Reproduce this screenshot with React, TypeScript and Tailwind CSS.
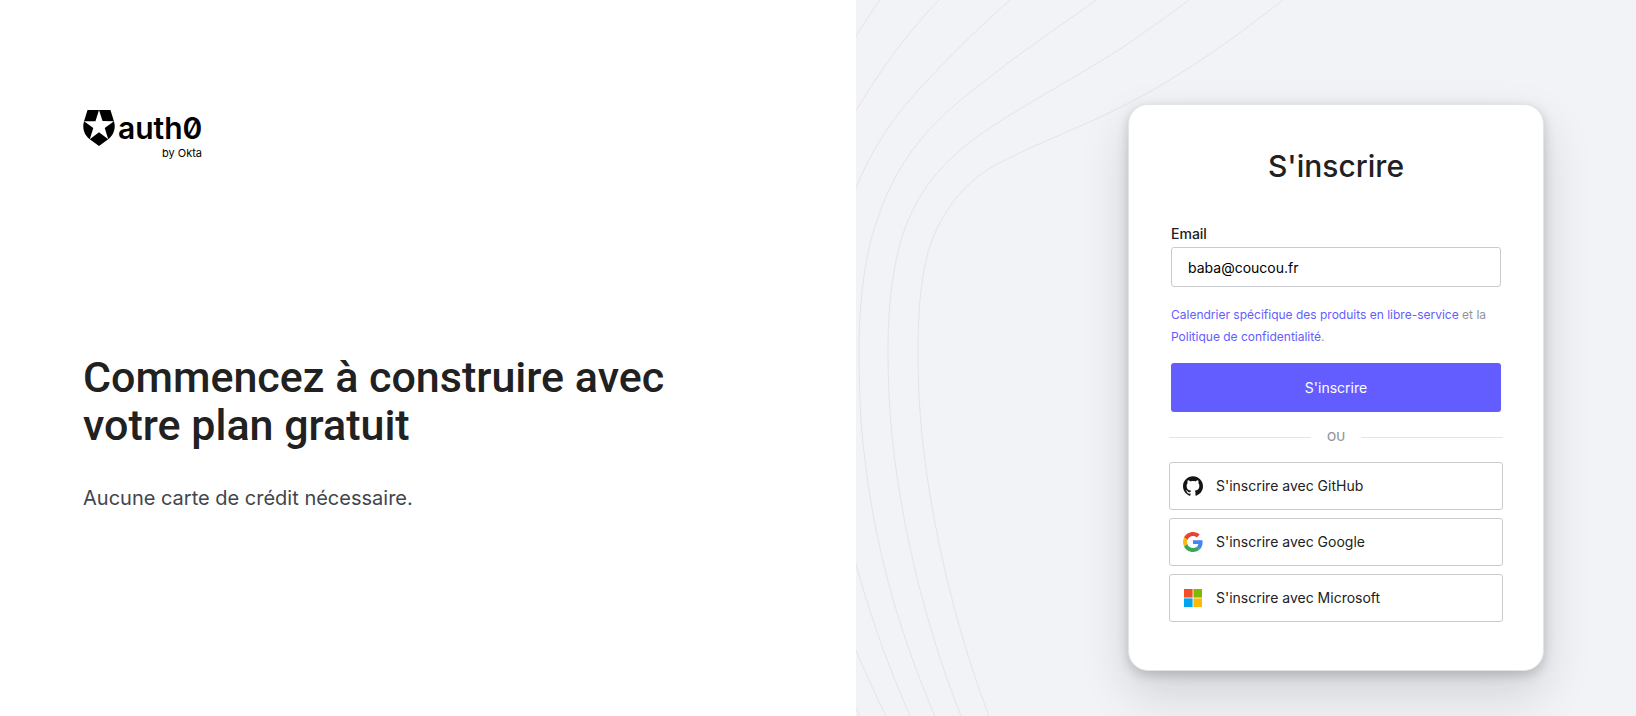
import React from "react";
import { SiAuth0, SiGithub } from "react-icons/si";

function GoogleIcon() {
  return (
    <svg viewBox="0 0 48 48" className="size-5" aria-hidden="true">
      <path
        fill="#EA4335"
        d="M24 9.5c3.54 0 6.71 1.22 9.21 3.6l6.85-6.85C35.9 2.38 30.47 0 24 0 14.62 0 6.51 5.38 2.56 13.22l7.98 6.19C12.43 13.72 17.74 9.5 24 9.5z"
      />
      <path
        fill="#4285F4"
        d="M46.98 24.55c0-1.57-.15-3.09-.38-4.55H24v9.02h12.94c-.58 2.96-2.26 5.48-4.78 7.18l7.73 6c4.51-4.18 7.09-10.36 7.09-17.65z"
      />
      <path
        fill="#FBBC05"
        d="M10.53 28.59c-.48-1.45-.76-2.99-.76-4.59s.27-3.14.76-4.59l-7.98-6.19C.92 16.46 0 20.12 0 24c0 3.88.92 7.54 2.56 10.78l7.97-6.19z"
      />
      <path
        fill="#34A853"
        d="M24 48c6.48 0 11.93-2.13 15.89-5.81l-7.73-6c-2.15 1.45-4.92 2.3-8.16 2.3-6.26 0-11.57-4.22-13.47-9.91l-7.98 6.19C6.51 42.62 14.62 48 24 48z"
      />
    </svg>
  );
}

function MicrosoftIcon() {
  return (
    <svg viewBox="0 0 20 20" className="size-5" aria-hidden="true">
      <path fill="#f25022" d="M1 1h8.6v8.6H1z" />
      <path fill="#7fba00" d="M10.4 1H19v8.6h-8.6z" />
      <path fill="#00a4ef" d="M1 10.4h8.6V19H1z" />
      <path fill="#ffb900" d="M10.4 10.4H19V19h-8.6z" />
    </svg>
  );
}

function Contours() {
  return (
    <svg
      className="pointer-events-none absolute top-0 left-0 h-[716px] w-[780px]"
      viewBox="0 0 780 716"
      fill="none"
      stroke="#e3e4e7"
      aria-hidden="true"
    >
      <path d="M0 36C8 23 16 11 24 0" />
      <path d="M0 111C24 70 52 32 83 0" />
      <path d="M0 188C16 148 38 116 67 85C93 57 123 27 154 0" />
      <path d="M240 0C200 29 165 52 130 80C80 118 38 155 15 240C6 275 3 315 3 350C3 395 5 435 11 476C22 558 46 640 79 716" />
      <path d="M333 0C303 22 272 45 240 64C210 82 176 101 143 122C95 152 62 185 45 240C35 275 32 315 32 350C32 395 35 435 41 476C53 558 75 640 105 716" />
      <path d="M427 0C366 48 305 90 240 119C200 137 172 148 143 163C113 179 91 203 76 240C65 270 62 310 62 350C62 395 65 435 71 476C83 556 104 640 133 716" />
      <path d="M0 564C14 615 32 666 54 716" />
      <path d="M0 650C9 672 19 694 30 716" />
      <path d="M0 708L4 716" />
    </svg>
  );
}

const providers = [
  { name: "GitHub", icon: <SiGithub className="size-5 text-[#161514]" /> },
  { name: "Google", icon: <GoogleIcon /> },
  { name: "Microsoft", icon: <MicrosoftIcon /> },
];

export default function App() {
  return (
    <div className="flex min-h-screen bg-white font-['Inter',sans-serif] text-[#212121]">
      <main className="min-w-0 flex-1 px-[83px] pt-[110px]">
        <div className="w-[119px] text-black">
          <div className="flex h-9 items-center">
            <SiAuth0 className="-mx-0.5 size-9 shrink-0" />
            <span className="pl-[3px] text-[30px] leading-9 font-semibold slashed-zero">auth0</span>
          </div>
          <p className="text-right text-[11px] leading-[14px]">by Okta</p>
        </div>
        <h1 className="mt-[193px] max-w-[640px] font-['Roboto',sans-serif] text-[43px] leading-[48px] font-medium">
          Commencez à construire avec votre plan gratuit
        </h1>
        <p className="mt-[33px] text-xl leading-8 text-[#41454c]">Aucune carte de crédit nécessaire.</p>
      </main>

      <aside className="relative flex w-[780px] shrink-0 items-start justify-end overflow-hidden bg-[#f1f3f7] pt-[104px] pr-[92px]">
        <Contours />
        <section className="relative w-[416px] rounded-[20px] border border-[#e3e4e6] bg-white px-10 pt-[41px] pb-12 shadow-[0_22px_50px_rgba(0,0,0,0.14),0_4px_12px_rgba(0,0,0,0.18)]">
          <h2 className="text-center text-[30px] leading-10 font-medium">S'inscrire</h2>
          <form className="mt-[38px] px-0.5" onSubmit={(e) => e.preventDefault()}>
            <label htmlFor="email" className="block text-sm leading-5 font-medium">
              Email
            </label>
            <input
              id="email"
              type="email"
              defaultValue="baba@coucou.fr"
              className="mt-[3px] block h-10 w-full rounded-[3px] border border-[#c9cace] px-4 text-sm text-black outline-none"
            />
            <p className="mt-[17px] text-xs leading-[22px] text-[#8f959e]">
              <a href="#calendrier" className="text-[#635dff]">
                Calendrier spécifique des produits en libre-service
              </a>{" "}
              et la{" "}
              <a href="#confidentialite" className="text-[#635dff]">
                Politique de confidentialité
              </a>
              .
            </p>
            <button
              type="submit"
              className="mt-[15px] block h-[49px] w-full rounded-[3px] bg-[#635dff] text-sm text-white"
            >
              S'inscrire
            </button>
          </form>
          <div className="mt-[17px] flex items-center gap-4 text-xs leading-4 font-medium text-[#8f959e]">
            <span className="h-px flex-1 bg-[#e3e4e6]" />
            OU
            <span className="h-px flex-1 bg-[#e3e4e6]" />
          </div>
          <div className="mt-[17px] flex flex-col gap-2">
            {providers.map((p) => (
              <button
                key={p.name}
                type="button"
                className="flex h-12 w-full items-center gap-[13px] rounded-[3px] border border-[#c9cace] px-[13px] text-left text-sm"
              >
                {p.icon}
                S'inscrire avec {p.name}
              </button>
            ))}
          </div>
        </section>
      </aside>
    </div>
  );
}
